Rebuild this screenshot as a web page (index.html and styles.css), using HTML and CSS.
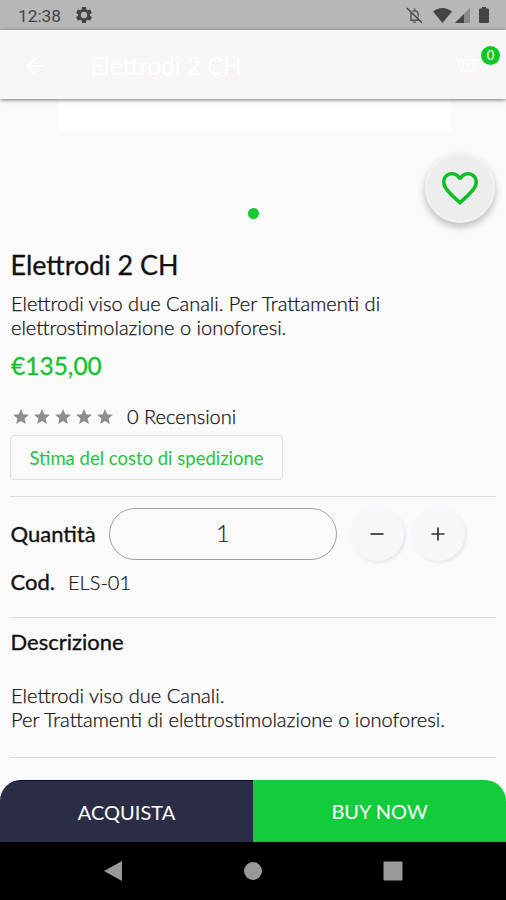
FILE: index.html
```html
<!DOCTYPE html>
<html lang="it">
<head>
<meta charset="utf-8">
<title>Elettrodi 2 CH</title>
<link rel="stylesheet" href="styles.css">
</head>
<body>
<div class="statusbar">
  <span class="clock">12:38</span>
  <svg class="gear" viewBox="2 2 20 20"><path fill-rule="evenodd" d="M19.43 12.98c.04-.32.07-.64.07-.98s-.03-.66-.07-.98l2.11-1.65c.19-.15.24-.42.12-.64l-2-3.46c-.12-.22-.39-.3-.61-.22l-2.49 1c-.52-.4-1.08-.73-1.69-.98l-.38-2.65C14.46 2.18 14.25 2 14 2h-4c-.25 0-.46.18-.49.42l-.38 2.65c-.61.25-1.17.59-1.69.98l-2.49-1c-.23-.09-.49 0-.61.22l-2 3.46c-.13.22-.07.49.12.64l2.11 1.65c-.04.32-.07.65-.07.98s.03.66.07.98l-2.11 1.65c-.19.15-.24.42-.12.64l2 3.46c.12.22.39.3.61.22l2.49-1c.52.4 1.08.73 1.69.98l.38 2.65c.03.24.24.42.49.42h4c.25 0 .46-.18.49-.42l.38-2.65c.61-.25 1.17-.59 1.69-.98l2.49 1c.23.09.49 0 .61-.22l2-3.46c.12-.22.07-.49-.12-.64l-2.11-1.65zM12 16a4 4 0 1 1 0-8 4 4 0 0 1 0 8z"/></svg>
  <div class="tray">
    <svg class="bell" viewBox="0 0 17 17"><path d="M4 13.2h9M5 13V7.300a3.600 3.600 0 0 1 7.200 0V13M8.600 3.500V1.500" fill="none" stroke="#555" stroke-width="1.500"/><path d="M7 14.500h3.200a1.600 1.600 0 0 1-3.200 0z" fill="#555"/><path d="M1.800 .5L17 15" stroke="#b7b7b7" stroke-width="1.200"/><path d="M.8 1L16 15.800" stroke="#444" stroke-width="1.500"/></svg>
    <svg class="wifi" viewBox="0 0 19 15"><path d="M0 3.600C5.500-1.100 13.500-1.100 19 3.600L9.500 15z"/></svg>
    <svg class="signal" viewBox="0 0 15 15"><path d="M15 0v15H0z" opacity=".4"/><path d="M9 6v9H0z"/></svg>
    <svg class="battery" viewBox="0 0 10 16"><path d="M3 0h4v1.600h2q1 0 1 1V15q0 1-1 1H1q-1 0-1-1V2.600q0-1 1-1h2z"/></svg>
  </div>
</div>
<header class="appbar">
  <svg class="back" viewBox="4 4 16 16"><path d="M20 11H7.830l5.590-5.590L12 4l-8 8 8 8 1.410-1.410L7.830 13H20z"/></svg>
  <span class="appbar-title">Elettrodi 2 CH</span>
  <div class="cart">
    <svg viewBox="0 0 24 24"><path d="M0 4h3l4 13h13l3-11H4M8 21h2M18 21h2M9 8v7M14 8v7M19 8v7" fill="none" stroke="#fff" stroke-width="2"/></svg>
    <span class="badge">0</span>
  </div>
</header>
<main class="content">
  <section class="gallery">
    <div class="photo"></div>
    <span class="dot"></span>
    <button class="favorite" aria-label="Preferiti"><svg viewBox="2 3 20 18.350"><path d="M16.500 3c-1.740 0-3.410.81-4.500 2.090C10.910 3.810 9.240 3 7.500 3 4.420 3 2 5.420 2 8.500c0 3.780 3.400 6.860 8.550 11.540L12 21.350l1.450-1.320C18.600 15.360 22 12.280 22 8.500 22 5.420 19.580 3 16.500 3zm-4.400 15.550l-.1.100-.1-.1C7.140 14.240 4 11.390 4 8.500 4 6.500 5.500 5 7.500 5c1.540 0 3.040.99 3.570 2.360h1.870C13.460 5.990 14.960 5 16.500 5c2 0 3.500 1.500 3.500 3.500 0 2.890-3.140 5.740-7.900 10.050z"/></svg></button>
  </section>
  <h1 class="title">Elettrodi 2 CH</h1>
  <p class="summary">Elettrodi viso due Canali. Per Trattamenti di<br>elettrostimolazione o ionoforesi.</p>
  <div class="price">€135,00</div>
  <div class="reviews">
    <div class="stars">
      <svg viewBox="2 2 20 19"><path d="M12 17.270L18.180 21l-1.640-7.030L22 9.240l-7.190-.61L12 2 9.190 8.630 2 9.240l5.460 4.730L5.820 21z"/></svg>
      <svg viewBox="2 2 20 19"><path d="M12 17.270L18.180 21l-1.640-7.030L22 9.240l-7.190-.61L12 2 9.190 8.630 2 9.240l5.460 4.730L5.820 21z"/></svg>
      <svg viewBox="2 2 20 19"><path d="M12 17.270L18.180 21l-1.640-7.030L22 9.240l-7.190-.61L12 2 9.190 8.630 2 9.240l5.460 4.730L5.820 21z"/></svg>
      <svg viewBox="2 2 20 19"><path d="M12 17.270L18.180 21l-1.640-7.030L22 9.240l-7.190-.61L12 2 9.190 8.630 2 9.240l5.460 4.730L5.820 21z"/></svg>
      <svg viewBox="2 2 20 19"><path d="M12 17.270L18.180 21l-1.640-7.030L22 9.240l-7.190-.61L12 2 9.190 8.630 2 9.240l5.460 4.730L5.820 21z"/></svg>
    </div>
    <span class="review-count">0 Recensioni</span>
  </div>
  <button class="shipping"><span>Stima del costo di spedizione</span></button>
  <hr class="rule">
  <div class="quantity">
    <span class="label">Quantità</span>
    <div class="amount">1</div>
    <button class="step" aria-label="Meno"><svg viewBox="0 0 14 14"><path d="M.5 7h13"/></svg></button>
    <button class="step" aria-label="Più"><svg viewBox="0 0 14 14"><path d="M.5 7h13M7 .5v13"/></svg></button>
  </div>
  <div class="code"><span class="label">Cod.</span><span class="sku">ELS-01</span></div>
  <hr class="rule">
  <h2 class="label heading">Descrizione</h2>
  <p class="description">Elettrodi viso due Canali.<br>Per Trattamenti di elettrostimolazione o ionoforesi.</p>
  <hr class="rule">
</main>
<div class="actions">
  <button class="buy dark">ACQUISTA</button>
  <button class="buy green">BUY NOW</button>
</div>
<nav class="navbar">
  <svg viewBox="0 0 20 22"><path d="M19 1v20L1 11z" stroke-linejoin="round"/></svg>
  <svg viewBox="0 0 20 22"><circle cx="10" cy="11" r="9"/></svg>
  <svg viewBox="0 0 20 22"><rect x=".5" y="1.500" width="19" height="19" rx="1"/></svg>
</nav>
</body>
</html>
```
FILE: styles.css
```css
* { box-sizing: border-box; }
body {
  margin: 0;
  width: 506px;
  height: 900px;
  overflow: hidden;
  display: flex;
  flex-direction: column;
  background: #fafafa;
  color: #111;
  font-family: Lato, "Liberation Sans", sans-serif;
}
button { border: 0; padding: 0; background: none; font: inherit; color: inherit; }
svg { display: block; flex: none; }
h1, h2, p { margin: 0; }

.statusbar {
  height: 30px;
  flex: none;
  display: flex;
  align-items: center;
  padding: 0 17px 0 18px;
  background: #b7b7b7;
  color: #444;
  fill: #444;
}
.clock { font: 17.3px/30px Roboto, sans-serif; width: 58px; padding-top: 1px; }
.gear { width: 16px; height: 16px; }
.tray { margin-left: auto; display: flex; align-items: center; }
.bell { width: 17px; height: 17px; margin-right: 10px; }
.wifi { width: 19px; height: 15px; margin-right: 3px; }
.signal { width: 15px; height: 15px; margin-right: 9px; }
.battery { width: 10px; height: 16px; }

.appbar {
  height: 69px;
  flex: none;
  display: flex;
  align-items: center;
  padding: 1px 6px 0 26px;
  position: relative;
  background: #f7f5f6;
  border-top: 1px solid #fff;
  box-shadow: 0 1px 4px rgba(0, 0, 0, .55);
  color: #fff;
  z-index: 1;
}
.back { width: 18px; height: 18px; fill: #fff; }
.appbar-title { margin-left: 46px; font-size: 24.3px; line-height: 30px; }
.cart { margin-left: auto; width: 46px; height: 24px; position: relative; }
.cart svg { width: 24px; height: 24px; opacity: .6; }
.badge {
  position: absolute;
  right: 0;
  top: -8px;
  width: 19px;
  height: 19px;
  border-radius: 50%;
  background: #08c822;
  font: 13px/19px Lato, sans-serif;
  text-align: center;
}

.content { flex: 1; padding: 0 10px; }
.gallery { height: 144px; position: relative; }
.photo { width: 393px; height: 32px; margin-left: 48px; background: #fff; border-radius: 0 0 4px 4px; }
.dot {
  display: block;
  width: 11px;
  height: 11px;
  margin: 77px auto 0;
  border-radius: 50%;
  background: #12ca34;
}
.favorite {
  position: absolute;
  right: 1px;
  top: 54px;
  width: 70px;
  height: 70px;
  border-radius: 50%;
  background: #ededed;
  border: 2px solid #f3f3f3;
  box-shadow: 0 4px 7px rgba(0, 0, 0, .25);
  display: flex;
  align-items: center;
  justify-content: center;
}
.favorite svg { width: 36px; height: 33px; fill: #0dbf24; }

.title { font-size: 26.9px; font-weight: 400; line-height: 43px; height: 44px; -webkit-text-stroke: .3px; padding-left: .5px; }
.summary { font-size: 20px; font-weight: 300; line-height: 23.5px; height: 53px; padding: 5px 0 0 1px; color: #111; white-space: nowrap; -webkit-text-stroke: .25px; }
.price { font-size: 24.5px; line-height: 52px; height: 54px; padding-left: 1px; color: #10c42c; -webkit-text-stroke: .3px; }
.reviews { display: flex; align-items: center; height: 41px; padding-top: 4px; }
.stars { display: flex; gap: 5px; padding-left: 3px; }
.stars svg { width: 16px; height: 15px; fill: #8e8e8e; }
.review-count { margin: -2px 0 0 14px; font-size: 20px; font-weight: 300; line-height: 30px; color: #111; white-space: nowrap; -webkit-text-stroke: .25px; }
.shipping {
  width: 273px;
  height: 45px;
  display: block;
  border: 1px solid #dedede;
  border-radius: 4px;
  color: #23c440;
  font-size: 18.5px;
  line-height: 44px;
  white-space: nowrap;
}
.rule { margin: 0; border: 0; height: 1px; background: #dcdcdc; }
.shipping + .rule { margin-top: 16px; }
.quantity { display: flex; align-items: center; margin-top: 11px; height: 52px; }
.label { font-size: 22px; font-weight: 400; line-height: 26px; color: #111; padding-left: .5px; -webkit-text-stroke: .35px; }
.quantity .label { width: 99px; }
.amount {
  width: 228px;
  height: 52px;
  border: 1px solid #a0a0a0;
  border-radius: 26px;
  font-size: 23px;
  font-weight: 300;
  line-height: 49px;
  text-align: center;
  color: #222;
  -webkit-text-stroke: .2px;
  margin-right: 13px;
}
.step {
  width: 54px;
  height: 54px;
  border-radius: 50%;
  background: #f6f6fb;
  box-shadow: 2px 2px 3px rgba(0, 0, 0, .07);
  display: flex;
  align-items: center;
  justify-content: center;
}
.step + .step { margin-left: 7px; }
.step svg { width: 14px; height: 14px; stroke: #333; stroke-width: 1.7; }
.code { display: flex; align-items: center; height: 45px; padding-bottom: 2px; margin-bottom: 12px; }
.code .label { width: 58px; }
.sku { font-size: 20px; font-weight: 300; color: #111; -webkit-text-stroke: .2px; }
.heading { height: 48px; line-height: 47px; }
.description { font-size: 20.1px; font-weight: 300; line-height: 23.5px; height: 91px; padding: 18px 0 0 1px; color: #111; white-space: nowrap; -webkit-text-stroke: .25px; }

.actions { height: 62px; flex: none; display: flex; }
.buy { flex: 1; height: 62px; font-size: 20px; line-height: 62px; color: #fff; }
.dark { background: #2b2d45; border-top-left-radius: 21px; border-top: 1px solid #07083a; line-height: 60px; }
.green { background: #12cc3c; border-top-right-radius: 21px; }

.navbar {
  height: 58px;
  flex: none;
  display: flex;
  justify-content: center;
  align-items: center;
  gap: 120px;
  background: #000;
}
.navbar svg { width: 20px; height: 22px; fill: #999; }
```
